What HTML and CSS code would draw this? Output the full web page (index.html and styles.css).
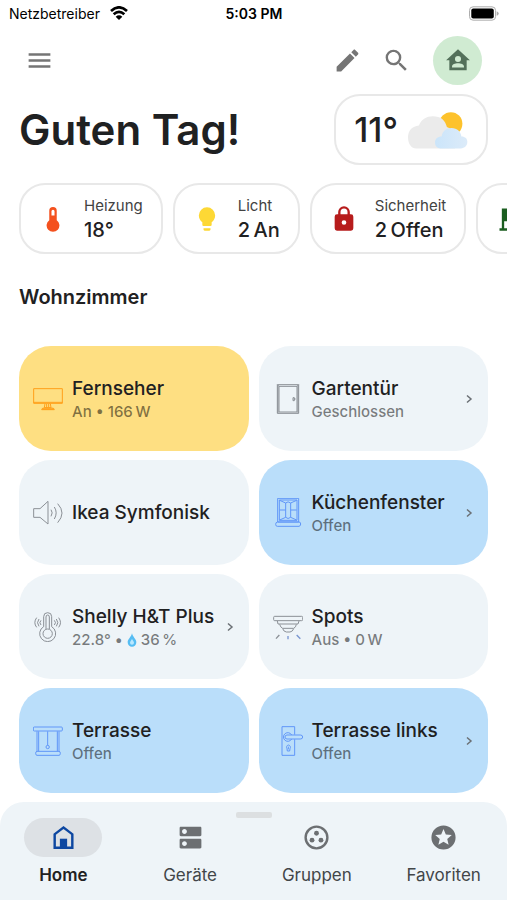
FILE: index.html
```html
<!DOCTYPE html>
<html lang="de">
<head>
<meta charset="utf-8">
<meta name="viewport" content="width=device-width, initial-scale=1">
<title>Home</title>
<link rel="stylesheet" href="styles.css">
</head>
<body>
<div class="app">
  <div class="status">
    <span class="carrier">Netzbetreiber
      <svg class="wifi" viewBox="0 0 54 42" aria-hidden="true"><g fill="none" stroke="#000" stroke-width="8"><path d="M3 15Q27-7 51 15"/><path d="M11 25Q27 10 43 25"/></g><path d="M17 32Q27 24 37 32L27 42Z"/></svg>
    </span>
    <span class="clock">5:03 PM</span>
    <svg class="battery" viewBox="0 0 92 44" aria-hidden="true"><rect x="1.500" y="1.500" width="80" height="41" rx="11" fill="#fff" stroke="#aaa" stroke-width="3"/><rect x="7" y="7" width="69" height="30" rx="6"/><path d="M85 15Q91 17 91 22T85 29Z" fill="#aaa"/></svg>
  </div>

  <header class="toolbar">
    <button class="icon-button" aria-label="Menü"><svg class="icon" viewBox="0 0 24 24"><path d="M3 6h18v2H3zM3 11h18v2H3zM3 16h18v2H3z"/></svg></button>
    <div class="actions">
      <button class="icon-button" aria-label="Bearbeiten"><svg class="icon" viewBox="0 0 24 24"><path d="M20.710 7.040C21.100 6.650 21.100 6 20.710 5.630L18.370 3.290C18 2.900 17.350 2.900 16.960 3.290L15.120 5.120L18.870 8.870M3 17.250V21H6.750L17.810 9.930L14.060 6.180L3 17.250Z"/></svg></button>
      <button class="icon-button" aria-label="Suchen"><svg class="icon" viewBox="0 0 24 24"><path d="M15.500 14h-.790l-.280-.270A6.471 6.471 0 0 0 16 9.500 6.500 6.500 0 1 0 9.500 16c1.610 0 3.090-.590 4.230-1.570l.270.280v.790l5 4.990L20.490 19l-4.990-5zm-6 0C7.010 14 5 11.990 5 9.500S7.010 5 9.500 5 14 7.010 14 9.500 11.990 14 9.500 14z"/></svg></button>
      <button class="avatar" aria-label="Zuhause"><svg class="icon" viewBox="0 0 24 24"><path fill-rule="evenodd" d="M12 2L1 12.300H4V21.500H20V12.300H23ZM12 8.200A2.800 2.800 0 1 1 12 13.800A2.800 2.800 0 1 1 12 8.200ZM6.500 19V18C6.500 13.900 17.500 13.900 17.500 18V19Z"/></svg></button>
    </div>
  </header>

  <main class="content">
    <div class="greeting">
      <h1>Guten Tag!</h1>
      <button class="weather">11°
        <svg class="weather-icon" viewBox="468 328 182 114" aria-hidden="true"><defs><linearGradient id="sky"><stop stop-color="#cbe5fa"/><stop offset="1" stop-color="#dcebf9"/></linearGradient></defs><circle cx="598" cy="366" r="35" fill="#fdc22c"/><path fill="#ebebeb" d="M493 441C478 441 468 427 468 407C468 386 481 373 501 371C509 351 525 343 543 343C568 343 581 355 586 376C605 383 611 394 611 410V441Z"/><path fill="url(#sky)" d="M567 441C557 441 550 434 550 423C550 412 558 405 570 405C573 388 583 379 600 379C618 379 628 390 630 405C642 405 648 412 648 421C648 433 640 441 628 441Z"/></svg>
      </button>
    </div>

    <div class="chips">
      <button class="chip"><svg class="chip-icon heat" viewBox="0 0 24 24"><path fill-rule="evenodd" d="M15.200 13V5A3.200 3.200 0 0 0 8.800 5V13A5.500 5.500 0 1 0 15.200 13ZM12 4A1.300 1.300 0 0 1 13.300 5.300V9H10.700V5.300A1.300 1.300 0 0 1 12 4Z"/></svg><span class="chip-text"><span class="chip-label">Heizung</span><span class="chip-value">18°</span></span></button>
      <button class="chip"><svg class="chip-icon light" viewBox="0 0 24 24"><path d="M12 2A7 7 0 0 0 5 9C5 11.380 6.190 13.470 8 14.740V17A1 1 0 0 0 9 18H15A1 1 0 0 0 16 17V14.740C17.810 13.470 19 11.380 19 9A7 7 0 0 0 12 2ZM9 21A1 1 0 0 0 10 22H14A1 1 0 0 0 15 21V20H9V21Z"/></svg><span class="chip-text"><span class="chip-label">Licht</span><span class="chip-value">2&#8239;An</span></span></button>
      <button class="chip"><svg class="chip-icon lock" viewBox="0 0 24 24"><path fill-rule="evenodd" d="M12 17A2 2 0 1 0 12 13A2 2 0 0 0 12 17ZM18 8A2 2 0 0 1 20 10V20A2 2 0 0 1 18 22H6A2 2 0 0 1 4 20V10A2 2 0 0 1 6 8H7V6A5 5 0 0 1 17 6V8H18ZM12 3A3 3 0 0 0 9 6V8H15V6A3 3 0 0 0 12 3Z"/></svg><span class="chip-text"><span class="chip-label">Sicherheit</span><span class="chip-value">2&#8239;Offen</span></span></button>
      <button class="chip" aria-label="Rollos"><svg class="chip-icon blind" viewBox="0 0 24 24"><path d="M5 3H20V20H22V22H3V20H5ZM7 14V20H18V14Z"/></svg></button>
    </div>

    <h2>Wohnzimmer</h2>

    <div class="tiles">
      <button class="tile on">
        <svg class="device" viewBox="0 0 90 90"><path d="M2 14H88V58H2ZM2 55H88M36 59L34 71H54L52 59M41 60V70M47 60V70M26 77Q26 72 34 72H56Q64 72 64 77Z"/><path d="M28 75H62" stroke-width="4"/></svg>
        <span class="tile-text"><span class="name">Fernseher</span><span class="state">An • 166&#8239;W</span></span>
      </button>
      <button class="tile">
        <svg class="device" viewBox="0 0 90 90"><path d="M13 2H77V88H13ZM18 7H72V84H18ZM13 2L18 7M77 2L72 7M15 88V5M75 5V88M60 41H64V50H60ZM62 45H68"/></svg>
        <span class="tile-text"><span class="name">Gartentür</span><span class="state">Geschlossen</span></span>
        <svg class="chevron" viewBox="0 0 10 10"><path d="M3 1.500L7 5L3 8.500"/></svg>
      </button>
      <button class="tile">
        <svg class="device" viewBox="0 0 90 90"><path d="M2 32H21L45 10V78L21 58H2ZM54 35Q61 44 54 55M64 27Q75 44 64 63M74 17Q100 45 74 74"/></svg>
        <span class="tile-text"><span class="name">Ikea Symfonisk</span></span>
      </button>
      <button class="tile open">
        <svg class="device" viewBox="0 0 90 90"><path d="M14 1H77V72H14ZM19 6H72V67H19ZM20 7L38 15V58L20 66M71 7L53 15V58L71 66M20 36H38M53 36H71M38 15Q45 8 53 15M38 58Q45 65 53 58M13 72H78Q83 72 83 78T78 85H13Q8 85 8 79T13 72Z"/></svg>
        <span class="tile-text"><span class="name">Küchenfenster</span><span class="state">Offen</span></span>
        <svg class="chevron" viewBox="0 0 10 10"><path d="M3 1.500L7 5L3 8.500"/></svg>
      </button>
      <button class="tile">
        <svg class="device" viewBox="0 0 90 90"><path d="M32 44V14Q32 2 44 2T56 14V44A24 24 0 1 1 32 44ZM39 51V15Q39 9 44 9T49 15V51M44 51A14 14 0 1 0 44 79A14 14 0 1 0 44 51ZM24 25Q17 32 24 39M18 21Q9 32 18 43M11 17Q0 32 11 46M64 25Q71 32 64 39M70 21Q79 32 70 43M77 17Q88 32 77 46"/></svg>
        <span class="tile-text"><span class="name">Shelly H&amp;T Plus</span><span class="state">22.8° • <svg class="drop" viewBox="0 0 30 42" role="img" aria-label="Luftfeuchtigkeit"><path d="M15 1C13 12 2 18 2 28A13 13 0 0 0 28 28C28 18 17 12 15 1Z" fill="#56bdf3"/><path d="M15 17C14 22 9 24 9 29A6 6 0 0 0 21 29C21 24 16 22 15 17Z" fill="#b9e8ff"/></svg> 36&#8239;%</span></span>
        <svg class="chevron" viewBox="0 0 10 10"><path d="M3 1.500L7 5L3 8.500"/></svg>
      </button>
      <button class="tile">
        <svg class="device" viewBox="0 0 90 90"><path d="M5 13H86Q89 13 89 16V23Q89 26 86 26H5Q2 26 2 23V16Q2 13 5 13ZM13 27L15 36H75L78 27M20 37Q22 46 29 49H62Q69 46 70 37M29 50Q32 59 40 60H51Q59 59 62 50"/><path d="M19 69L9 80" stroke-width="4"/><path d="M45 72V82" stroke="#7895cf" stroke-width="4"/><path d="M71 69L82 80" stroke="#7895cf" stroke-width="4"/></svg>
        <span class="tile-text"><span class="name">Spots</span><span class="state">Aus • 0&#8239;W</span></span>
      </button>
      <button class="tile open">
        <svg class="device" viewBox="0 0 90 90"><path d="M4 3H85Q88 3 88 6V12Q88 15 85 15H4Q1 15 1 12V6Q1 3 4 3ZM12 16V76M17 16V76M73 16V76M78 16V76M44 16V58M44 58A5 5 0 1 0 44 68A5 5 0 1 0 44 58ZM12 76H78Q82 76 82 82T78 88H12Q8 88 8 82T12 76Z"/></svg>
        <span class="tile-text"><span class="name">Terrasse</span><span class="state">Offen</span></span>
      </button>
      <button class="tile open">
        <svg class="device" viewBox="0 0 90 90"><path d="M27 2H65V26M65 40V88H27V2M56 27A13 13 0 1 0 56 39M42 27H82Q89 27 89 33T82 39H42Q36 39 36 33T42 27ZM46 57A7 7 0 0 1 51 68L50 75H43L42 68A7 7 0 0 1 46 57ZM46 62V70"/></svg>
        <span class="tile-text"><span class="name">Terrasse links</span><span class="state">Offen</span></span>
        <svg class="chevron" viewBox="0 0 10 10"><path d="M3 1.500L7 5L3 8.500"/></svg>
      </button>
    </div>
  </main>

  <nav class="nav">
    <span class="handle"></span>
    <div class="nav-items">
      <a class="nav-item active" href="#home"><span class="pill"><svg class="icon" viewBox="0 0 24 24"><path fill-rule="evenodd" d="M12 2.500L3.700 8.800V21.500H20.300V8.800ZM12 5L18.300 9.800V19.500H5.700V9.800Z"/><path d="M9 13H15V20.500H9Z"/></svg></span>Home</a>
      <a class="nav-item" href="#geraete"><span class="pill"><svg class="icon" viewBox="0 0 24 24"><path fill-rule="evenodd" d="M20 13H4c-.550 0-1 .450-1 1v6c0 .550.450 1 1 1h16c.550 0 1-.450 1-1v-6c0-.550-.450-1-1-1zM7 19c-1.100 0-2-.900-2-2s.900-2 2-2 2 .900 2 2-.900 2-2 2zM20 3H4c-.550 0-1 .450-1 1v6c0 .550.450 1 1 1h16c.550 0 1-.450 1-1V4c0-.550-.450-1-1-1zM7 9c-1.100 0-2-.900-2-2s.900-2 2-2 2 .900 2 2-.900 2-2 2z"/></svg></span>Geräte</a>
      <a class="nav-item" href="#gruppen"><span class="pill"><svg class="icon" viewBox="0 0 24 24"><circle cx="12" cy="12" r="9" fill="none" stroke="currentColor" stroke-width="2"/><circle cx="12" cy="8.500" r="2"/><circle cx="8.300" cy="14.200" r="2"/><circle cx="15.700" cy="14.200" r="2"/></svg></span>Gruppen</a>
      <a class="nav-item" href="#favoriten"><span class="pill"><svg class="icon" viewBox="0 0 24 24"><path fill-rule="evenodd" d="M12 2A10 10 0 1 0 12 22A10 10 0 1 0 12 2ZM16.230 18L12 15.450L7.770 18L8.890 13.190L5.160 9.960L10.080 9.540L12 5L13.920 9.530L18.840 9.950L15.110 13.180Z"/></svg></span>Favoriten</a>
    </div>
  </nav>
</div>
</body>
</html>
```
FILE: styles.css
```css
* { box-sizing: border-box; }

body {
  margin: 0;
  background: #fff;
  color: #1f2122;
  font-family: Inter, "Liberation Sans", sans-serif;
}

button {
  border: 0;
  padding: 0;
  background: none;
  color: inherit;
  font: inherit;
  text-align: left;
}

svg { display: block; flex: none; }

.app {
  display: flex;
  flex-direction: column;
  min-height: 100vh;
}

.status {
  display: grid;
  grid-template-columns: 1fr auto 1fr;
  align-items: center;
  height: 28px;
  padding: 0 8px 2px 9px;
  color: #000;
  font-size: 14px;
}
.carrier { display: flex; align-items: center; gap: 10px; }
.wifi { width: 18px; height: 14px; }
.clock { font-weight: 600; }
.battery { width: 30px; height: 15px; justify-self: end; }

.toolbar {
  display: flex;
  align-items: center;
  justify-content: space-between;
  height: 64px;
  padding: 0 25px;
}
.actions { display: flex; align-items: center; gap: 20px; }
.icon { width: 29px; height: 29px; fill: currentColor; }
.icon-button { color: #757575; }
.avatar {
  display: grid;
  place-items: center;
  width: 49px;
  height: 49px;
  margin-left: 2px;
  border-radius: 50%;
  background: #d0ebd2;
  color: #53705a;
}
.avatar .icon { width: 26px; height: 26px; }

.content { flex: 1; padding: 2px 19px 9px; }

.greeting {
  display: flex;
  align-items: center;
  justify-content: space-between;
}
h1 { margin: 0; font-size: 42px; line-height: 48px; font-weight: 600; }
.weather {
  display: flex;
  align-items: center;
  gap: 10px;
  height: 71px;
  padding: 0 18px;
  border: 2px solid #e8e8e8;
  border-radius: 26px;
  font-size: 34px;
  font-weight: 500;
}
.weather-icon { width: 60px; height: 38px; }

.chips {
  display: flex;
  gap: 10px;
  margin: 18px -19px 0 0;
  overflow-x: auto;
  scrollbar-width: none;
}
.chip {
  display: flex;
  flex: none;
  align-items: center;
  gap: 17px;
  height: 71px;
  padding: 0 18px;
  border: 2px solid #e8e8e8;
  border-radius: 26px;
}
.chip-icon { width: 28px; height: 28px; fill: currentColor; }
.heat { color: #f4511e; }
.light { color: #fdd835; }
.lock { color: #b71c1c; }
.blind { color: #1b5e20; }
.chip-text { display: flex; flex-direction: column; }
.chip-label { font-size: 15px; line-height: 22px; color: #424242; }
.chip-value { font-size: 20px; line-height: 26px; font-weight: 500; }

h2 { margin: 30px 0 36px; font-size: 20px; line-height: 26px; font-weight: 600; }

.tiles {
  display: grid;
  grid-template-columns: 1fr 1fr;
  gap: 9px 10px;
}
.tile {
  display: flex;
  align-items: center;
  gap: 9px;
  height: 105px;
  padding: 0 14px;
  border-radius: 32px;
  background: #eef4f8;
}
.device {
  width: 30px;
  height: 30px;
  fill: none;
  stroke: #8b9096;
  stroke-width: 3;
}
.on { background: #fedf82; }
.on .device { stroke: #ff9f1a; }
.open { background: #badefa; }
.open .device { stroke: #6096f8; }
.tile-text { display: flex; flex: 1; flex-direction: column; white-space: nowrap; }
.name { font-size: 19px; line-height: 26px; font-weight: 500; }
.state { font-size: 15px; line-height: 20px; font-weight: 500; color: rgba(0, 0, 0, 0.5); }
.drop { display: inline-block; width: 10px; height: 14px; vertical-align: -2px; }
.chevron { width: 10px; height: 10px; fill: none; stroke: #6b7075; stroke-width: 1.5; }

.nav {
  display: flex;
  flex-direction: column;
  align-items: center;
  height: 98px;
  padding-top: 10px;
  border-radius: 24px 24px 0 0;
  background: #eef4f8;
}
.handle { width: 36px; height: 6px; border-radius: 2px; background: #dcdfe1; }
.nav-items { display: grid; grid-template-columns: repeat(4, 1fr); width: 100%; }
.nav-item {
  display: flex;
  flex-direction: column;
  align-items: center;
  gap: 6px;
  color: #424649;
  font-size: 17px;
  line-height: 24px;
  text-decoration: none;
}
.pill {
  display: grid;
  place-items: center;
  width: 78px;
  height: 39px;
  border-radius: 20px;
  color: #6c6f72;
}
.active { color: #1f2122; font-weight: 600; }
.active .pill { background: #dde1e5; color: #0d47a1; }
```
